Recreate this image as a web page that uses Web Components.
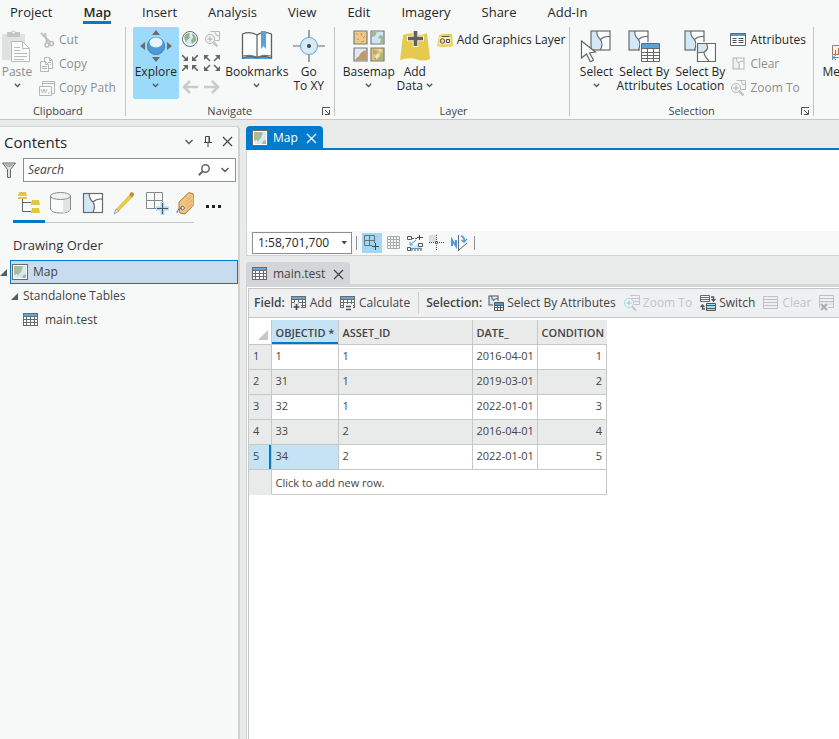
<!DOCTYPE html>
<html lang="en">
<head>
<meta charset="utf-8">
<title>Map - attribute table</title>
<style>
  html, body { margin: 0; height: 100%; }
  body { font: 12px/16px "Open Sans", "Noto Sans", sans-serif; color: #26262b; overflow: hidden; background: #e9ebea; }
</style>
</head>
<body>
<gis-app></gis-app>
<script>
const K = '#6a6a6a';
const grid = (x, y, w, h, c, head) => {
  let s = `<rect x="${x + .5}" y="${y + .5}" width="${w - 1}" height="${h - 1}" fill="#fff" stroke="${c}"/>`;
  s += `<rect x="${x + 1}" y="${y + 1}" width="${w - 2}" height="2" fill="${head}"/>`;
  for (let i = y + 3.5; i < y + h - 1; i += 3) s += `<path d="M${x} ${i}h${w}" stroke="${c}"/>`;
  for (let i = x + 3.5; i < x + w - 2; i += 4) s += `<path d="M${i} ${y + 3}v${h - 3}" stroke="${c}"/>`;
  return s;
};
const mapSheet = (x, y, s, c = K, f = '#d3e8f6') => {
  const k = s / 20;
  return `<g transform="translate(${x} ${y}) scale(${k})"><rect width="20" height="20" fill="#fcfdfd"/><path d="M0 0H6Q6 6 10 9Q12 14 10 20H0Z" fill="${f}"/><g fill="none" stroke="${c}" stroke-width="${1.2 / k}"><path d="M6 0Q6 6 10 9Q14 5 20 6M10 9Q13 13 10 20"/><rect width="20" height="20"/></g></g>`;
};
const thumb = '<rect x=".5" y=".5" width="15" height="15" fill="#fff" stroke="#6a6a6a"/><path d="M2 2h12v12H2z" fill="#a8bb9c"/><path d="M11 2h3v8l-3 1-1 3H5l2-4 2-2z" fill="#d5e9f4"/><path d="M2 11l3-1 1 2-1 2H2z" fill="#e5eee9"/>';
const ICONS = {
  paste: [32, 32, '<path d="M1 4h23v26H1z" fill="#e0e2e1"/><path d="M6 2h4q2-3 5 0h4v5H6z" fill="#c3c5c4"/><circle cx="12.500" cy="2.500" r="1" fill="#fff"/><path d="M10.500 11.500h11l7 7v13h-18z" fill="#fbfcfc" stroke="#b9bbba"/><path d="M21.500 11.500v7h7M13 17.500h6M13 20.500h6M13 23.500h13M13 26.500h13M13 29.500h10" fill="none" stroke="#b9bbba"/>'],
  cut: [16, 16, '<path d="M2 1l9 9M6 1l2 10" stroke="#c0c2c1" stroke-width="2"/><circle cx="8" cy="13" r="2" fill="none" stroke="#bbb" stroke-width="1.500"/><circle cx="12.500" cy="11.500" r="2" fill="none" stroke="#bbb" stroke-width="1.500"/>'],
  copy: [16, 16, '<g fill="#f8faf9" stroke="#b5b7b6"><path d="M5.500 1.500h5l3 3v8h-8z"/><path d="M1.500 5.500h5l3 3v7h-8z"/><path d="M6.500 5.500v3h3M3 10.500h5M3 12.500h5M10.500 1.500v3h3M9 6.500h3M11 8.500h1" fill="none"/></g>'],
  copypath: [16, 16, '<g fill="#f8faf9" stroke="#b5b7b6"><path d="M3.500 1.500h12v12h-12zM3.500 3.500h12"/><path d="M.5 6.500h12v9H.5z"/><path d="M2 9l1.500 4L5 9l1.500 4L8 9M9 13h2" fill="none"/></g>'],
  explore: [32, 32, '<g fill="#6b6b6b"><path d="M16 0l4 5h-8zM16 32l4-5h-8zM0 16l5-4v8zM32 16l-5-4v8z"/></g><circle cx="16" cy="16" r="9" fill="#4f9ad6"/><circle cx="16" cy="16" r="8.500" fill="none" stroke="#3d88c6"/><ellipse cx="16" cy="12.500" rx="6.500" ry="5" fill="#e7f4fc"/>'],
  globe: [16, 16, '<circle cx="8" cy="8" r="7.500" fill="#d7eaf5" stroke="#6a6a6a"/><circle cx="8" cy="8" r="6.200" fill="none" stroke="#fff"/><path d="M2 6q2-4 6-4l-1 3 1 2-3 2-1 3zM10 2q5 3 4 8l-4 3-1-4 2-2z" fill="#95b08b"/>'],
  zoomgray: [16, 16, '<path d="M6.500.5h9v9h-5M11 1l2 4 3-1" fill="#f4f6f5" stroke="#b9bbba"/><circle cx="6" cy="8" r="4.500" fill="#f1f4f3" stroke="#b5b7b6"/><path d="M3.500 8h5M6 5.500v5" stroke="#aaa"/><path d="M9.500 11.500l4 4" stroke="#c4c6c5" stroke-width="2.500"/>'],
  shrink: [16, 16, '<g fill="#666"><path d="M6 1v5H1zM10 1v5h5zM6 15v-5H1zM10 15v-5h5z"/></g><path d="M0 0l4 4M16 0l-4 4M0 16l4-4M16 16l-4-4" stroke="#666" stroke-width="1.600"/>'],
  expand: [16, 16, '<g fill="#666"><path d="M0 0h5L0 5zM16 0h-5l5 5zM0 16h5l-5-5zM16 16h-5l5-5z"/></g><path d="M2 2l4 4M14 2l-4 4M2 14l4-4M14 14l-4-4" stroke="#666" stroke-width="1.600"/>'],
  back: [16, 16, '<path d="M1 8h15M8 2L2 8l6 6" fill="none" stroke="#c9cbca" stroke-width="2.500"/>'],
  fwd: [16, 16, '<path d="M0 8h15M8 2l6 6-6 6" fill="none" stroke="#c9cbca" stroke-width="2.500"/>'],
  bookmarks: [32, 32, '<path d="M1 5v24h30V5" fill="#5aa2d8"/><path d="M1.500 4V28q8-3 14.500 0 6.500-3 14.500 0V4Q22 1 16 5 9 1 1.500 4z" fill="#fbfcfc" stroke="#606060" stroke-width="1.300"/><path d="M1.500 26q8-2 14.500 1 6.500-3 14.500-1" fill="none" stroke="#6a6a6a"/><path d="M16 5v22" stroke="#6a6a6a" stroke-width="1.300"/><path d="M20 1h5v18l-2.500-3-2.500 3z" fill="#5aa2d8"/>'],
  goto: [32, 32, '<path d="M16 0v7M16 25v7M0 16h7M25 16h7" stroke="#666" stroke-width="1.200"/><circle cx="16" cy="16" r="8.500" fill="#d6eaf7" stroke="#62a5d8"/><circle cx="16" cy="16" r="2" fill="#444"/>'],
  basemap: [32, 32, '<g stroke="#7a7a7a" stroke-width="1.200"><path d="M1 1h13v13H1z" fill="#ecca8a"/><path d="M18 1h13v13H18z" fill="#cfe6f4"/><path d="M1 18h13v13H1z" fill="#dfe9ef"/><path d="M18 18h13v13H18z" fill="#dfc27c"/></g><path d="M19 2h5l-2 4-3 1zM30 6v7h-3l1-4-3-1 2-3z" fill="#a0b794"/><path d="M13.500 20v10.500H2q2-4 4-4 1-5 7.500-6.500z" fill="#bd9b6a"/><path d="M20 19l4 2 1 4-5-1zM26 27l4-5v8h-6z" fill="#a6b47e"/><path d="M22 26l3-3 2 3-4 3zM26 19l3 1-2 2z" fill="#f6e5ae"/><path d="M3 3l2 2M8 3l1 3M4 9l2 1M10 8l2-2M8 12l3-1M21 28l2 1" stroke="#d78746"/>'],
  adddata: [32, 32, '<path d="M4 5q7-3 13-1 6 2 11-1l3 26q-7 3-14 0-7-2-16 1z" fill="#e6c94f"/><path d="M16.500 1v16M8 8.500h17" stroke="#f8f3dc" stroke-width="5.500"/><path d="M16.500 1v15M9 8.500h15" stroke="#606060" stroke-width="3.600"/>'],
  graphics: [16, 16, '<path d="M2 3q6-2 13-1l1 12q-8 2-16 0z" fill="#e9cf5e"/><path d="M2.500 4.500h11v8h-12z" fill="#f7efc4"/><path d="M4.500 4.500h8" stroke="#555"/><circle cx="5.500" cy="9" r="2.300" fill="#f3cfa2" stroke="#555"/><path d="M9.500 7.500h3v3h-3z" fill="#cfe6f5" stroke="#555"/>'],
  select: [32, 32, mapSheet(11, 1, 19) + '<path d="M1.500 11v17l5-4 4 8 3-2-4-7 6-1z" fill="#fbfcfc" stroke="#646464" stroke-width="1.200"/>'],
  selattr: [32, 32, mapSheet(1, 1, 19) + '<path d="M12 12h20v20H12z" fill="#f7f9f8"/><path d="M13.500 13.500h18v18h-18z" fill="#fff" stroke="#666"/><path d="M14 14h17v4H14z" fill="#5aa2d8"/><path d="M14 18.500h17M14 22.500h17M14 25.500h17M14 28.500h17M19.500 18v13M25.500 18v13" stroke="#666"/>'],
  selloc: [32, 32, mapSheet(1, 1, 19) + '<rect x="12" y="12" width="20" height="20" fill="#f7f9f8"/><path d="M13.500 13.500h18v18h-18z" fill="#fff"/><path d="M13 13h9q4 6-2 9l-7 1z" fill="#d3e8f6"/><path d="M13.500 13.500h18v18h-18zM22 13q4 6-2 9l-7 1M20 22q0 4 5 9" fill="none" stroke="#666" stroke-width="1.200"/>'],
  attributes: [16, 16, '<path d="M.5 1.500h15v12H.5z" fill="#fff" stroke="#666"/><path d="M1 2h14v2H1z" fill="#4f9ad6"/><path d="M2.500 6.500h4M2.500 8.500h4M2.500 10.500h4M8.500 6.500h5M8.500 8.500h5M8.500 10.500h5" stroke="#555"/>'],
  clear: [16, 16, mapSheet(3, 2, 11, '#bcbebd', '#eef1f0')],
  measure: [32, 32, '<path d="M1.500 15.500h29v9h-29z" fill="#fdf3ea" stroke="#b4764a"/><path d="M4.500 24v-4M7.500 24v-6M10.500 24v-4" stroke="#b4764a"/><path d="M1.500 25v5M2 27.500h29M5 25l-3 2.500L5 30" fill="none" stroke="#4f9ad6"/>'],
  chev: [7, 5, '<path d="M.8.800L3.500 3.500 6.200.800" fill="none" stroke="#555" stroke-width="1.300"/>'],
  chevbig: [10, 6, '<path d="M1.500 1l3.500 3.500L8.500 1" fill="none" stroke="#555" stroke-width="1.400"/>'],
  launcher: [8, 8, '<path d="M.5 8V.5H8M3 3l4 4M7.500 3v4.500H3" fill="none" stroke="#555"/>'],
  pin: [8, 12, '<path d="M1.500.5h4v6h-4zM0 6.500h8M4 7v4M5 1v5" fill="none" stroke="#444"/>'],
  close: [11, 11, '<path d="M1 1l9 9M10 1l-9 9" stroke="currentColor" stroke-width="1.200"/>'],
  filter: [14, 16, '<path d="M.5 1h13L8.500 7.500v8h-3v-8z" fill="#dfe3e1" stroke="#666"/><path d="M2 2h10L9 5H5z" fill="#a9b3ad"/>'],
  search: [12, 12, '<circle cx="7.500" cy="4.500" r="3.700" fill="none" stroke="#666" stroke-width="1.500"/><path d="M5 7L.8 11.200" stroke="#666" stroke-width="2"/>'],
  tree: [24, 24, '<path d="M5.500 7v13.500h9M5.500 11.500h9" fill="none" stroke="#666"/><path d="M2 1h7l1 4H1zM1 6h9v2H1zM15 9h7l1 5h-9zM15 17h7l1 5h-9z" fill="#e2c64b"/>'],
  database: [24, 24, '<path d="M1.500 5v13q1 4 10 4t10-4V5z" fill="#fafbfb" stroke="#8a8a8a"/><path d="M14 9v13q6-1 7-4V5q-1 3-7 4z" fill="#e1e4e2"/><ellipse cx="11.500" cy="5" rx="10" ry="3.500" fill="#f0f2f1" stroke="#8a8a8a"/>'],
  sheet: [24, 24, mapSheet(2.500, 2.500, 19)],
  pencil: [24, 24, '<path d="M3 18L16 4l3 3L6 20z" fill="#e6c94f"/><path d="M3 18l-2 5 5-3z" fill="#eee" stroke="#777" stroke-width=".600"/><path d="M16 4l2-3q3 0 3 3l-2 3z" fill="#c98b45"/>'],
  gridplus: [24, 24, '<path d="M1.500 1.500h16v16h-16zM9.500 1v16M1 9.500h16" fill="none" stroke="#888"/><path d="M17.500 11v13M11 17.500h13" stroke="#a5dbf5" stroke-width="4"/><path d="M17.500 12v11M12 17.500h11" stroke="#555"/>'],
  tag: [18, 24, '<path d="M3 11L13 1.500l3 1q2 0 2 3v8L9 23l-5-1q-1-1-1-4z" fill="#f0c37f" stroke="#b4763c"/><path d="M9 11l6-5M10 14l6-5M11 17l5-4" stroke="#e3a966"/><circle cx="6.500" cy="17" r="1.800" fill="#fff" stroke="#666"/><path d="M6 17q-5 1-5 5" fill="none" stroke="#666"/>'],
  dots: [16, 4, '<path d="M0 0h3v3H0zM6 0h3v3H6zM12 0h3v3h-3z" fill="#222"/>'],
  thumb: [16, 16, thumb],
  tri: [7, 7, '<path d="M7 0v7H0z" fill="#5c5c5c"/>'],
  table: [16, 14, grid(0, 0, 15, 13, K, '#5fa8de')],
  gp: [20, 20, '<path d="M2.500 2.500h10v10h-10zM7.500 2v10M2 7.500h10" fill="none" stroke="#64727a"/><path d="M10 10h8v8h-8z" fill="#a0d8f3"/><path d="M13.500 10v7M10 13.500h7" stroke="#444"/>'],
  mesh: [14, 14, '<path d="M.5.5h12v12H.5zM3.500 0v13M6.500 0v13M9.500 0v13M0 3.500h13M0 6.500h13M0 9.500h13" fill="none" stroke="#a3afa7"/>'],
  snap: [16, 16, '<path d="M4 13L14 7v7H2z" fill="#cde6f6"/><path d="M.5 1.500h4v3h-4zM11.500 8.500h4v3h-4zM.5 12.500h3v3h-3z" fill="#fff" stroke="#555"/><path d="M12.500 0v5M10 2.500h6" stroke="#444"/><path d="M5 3.500h5M4 15h11" fill="none" stroke="#555" stroke-dasharray="2 1"/><path d="M3 10l6-5M3 7v3h3M4 13.500h11" fill="none" stroke="#4f9ad6"/>'],
  cross: [16, 16, '<path d="M0 0h7v7H0z" fill="#dbe0dd"/><path d="M7.500 0v16M0 7.500h16" stroke="#555" stroke-dasharray="1 1"/><path d="M6.500 6.500h2v2h-2z" fill="#fff" stroke="#555"/>'],
  north: [17, 16, '<path d="M1 11V5l4 6V5" fill="none" stroke="#4f9ad6" stroke-width="2"/><path d="M7.500 0v16M8 15l8-7" stroke="#666"/><path d="M10 1q4 1 3 6M10.500 5l2.500 2 3-3" fill="none" stroke="#4f9ad6" stroke-width="1.500"/>'],
  tadd: [16, 16, grid(0, 1, 15, 12, K, '#5fa8de') + '<path d="M5.500 7v9M1 11.500h9" stroke="#eff0f2" stroke-width="4"/><path d="M5.500 9v6M2.500 12h6" stroke="#444" stroke-width="1.600"/>'],
  tcalc: [16, 16, grid(0, 1, 15, 12, K, '#5fa8de') + '<path d="M4 9h9v7H4z" fill="#eff0f2"/><path d="M6 11.500h5M6 14.500h5" stroke="#555" stroke-width="1.600"/>'],
  sba: [16, 16, mapSheet(1, 1, 9) + '<path d="M5 6h11v10H5z" fill="#eff0f2"/><path d="M6.500 7.500h9v8h-9z" fill="#fff" stroke="#555"/><path d="M7 8h8v2H7z" fill="#4f9ad6"/><path d="M7 10.500h8M7 12.500h8M9.500 10v5M12.500 10v5" stroke="#555"/>'],
  zsel: [16, 16, '<path d="M6 .5h9.500v9H10M7 3.500h8M10 6.500h5" fill="none" stroke="#c5c6c8"/><circle cx="5" cy="8" r="4.500" fill="#eef5f9" stroke="#a9d6ec"/><path d="M2.500 8h5M5 5.500v5" stroke="#9ac6dc"/><path d="M8 11.500l4 4" stroke="#c5c6c8" stroke-width="2"/>'],
  switch: [16, 16, '<path d="M.5.5h9v6h-9zM0 2.500h9M0 4.500h9" fill="#fff" stroke="#666"/><path d="M6.500 8.500h9v7h-9z" fill="#a9dcf5" stroke="#555"/><path d="M6 10.500h9M6 13.500h9" stroke="#555"/><path d="M11 2h2.500v4M11.500 4l2 2 2-2M5 14H2.500v-4M.5 12l2-2 2 2" fill="none" stroke="#555" stroke-width="1.300"/>'],
  rows: [16, 14, '<path d="M.5.5h14v12H.5zM0 3.500h15M0 6.500h15M0 9.500h15" fill="none" stroke="#bfc0c2"/>'],
  rowsx: [16, 16, '<path d="M.5.5h14v12H.5zM0 3.500h15M0 6.500h15" fill="none" stroke="#bfc0c2"/><path d="M1 7h13v3H1z" fill="#d4e9f4"/><path d="M1 8h8v8H1z" fill="#eff0f2"/><path d="M2 9l6 6M8 9l-6 6" stroke="#aaa" stroke-width="2"/>'],
  drop: [7, 4, '<path d="M.5 0h5.500L3.200 3.500z" fill="#444"/>'],
  corner: [10, 10, '<path d="M10 0v10H0z" fill="#c6c8c7"/>'],
};

customElements.define('ui-icon', class extends HTMLElement {
  constructor() { super(); this.attachShadow({ mode: 'open' }); }
  connectedCallback() {
    const [w, h, body] = ICONS[this.getAttribute('name')];
    this.shadowRoot.innerHTML = `<style>:host{display:block;flex:none}svg{display:block}</style><svg aria-hidden="true" width="${w}" height="${h}" viewBox="0 0 ${w} ${h}">${body}</svg>`;
  }
});

const BASE = '*{box-sizing:border-box}button,input,select{font:inherit;color:inherit;background:none;border:0;padding:0;margin:0}button{white-space:nowrap}';
const define = (tag, css, html) => {
  customElements.define(tag, class extends HTMLElement {
    constructor() {
      super();
      const t = document.createElement('template');
      t.innerHTML = `<style>${BASE}${css}</style>${typeof html === 'function' ? html(this) : html}`;
      this.attachShadow({ mode: 'open' }).append(t.content.cloneNode(true));
    }
  });
};

define('ribbon-tabs', `
  :host{display:block}
  nav{display:flex;gap:31px;padding:0 10px;height:26px}
  button{font-size:13px;line-height:18px;padding-top:3px;height:24px;border-bottom:3px solid transparent;flex:none}
  button[aria-selected=true]{font-weight:600;border-color:#007ac8}
`, '<nav role="tablist">' + ['Project', 'Map', 'Insert', 'Analysis', 'View', 'Edit', 'Imagery', 'Share', 'Add-In']
  .map(t => `<button role="tab" aria-selected="${t === 'Map'}">${t}</button>`).join('') + '</nav>');

define('ribbon-group', `
  :host{display:grid;grid-template-rows:1fr 16px;flex:none;height:92px;padding:0 var(--end,7px) 0 var(--start,7px);border-right:1px solid;border-image:linear-gradient(#c3c5c4 88px,transparent 88px) 1}
  .body{display:flex;min-width:0}
  .foot{display:grid;align-items:center;justify-items:center;color:#444;font-size:11px;position:relative}
  button{position:absolute;right:-3px;bottom:4px;height:8px}
`, el => `<div class="body"><slot></slot></div><div class="foot">${el.getAttribute('label') || ''}${el.hasAttribute('launcher') ? '<button aria-label="Options"><ui-icon name="launcher"></ui-icon></button>' : ''}</div>`);

define('ribbon-big', `
  :host{display:block;width:var(--w)}
  button{width:100%;height:72px;display:flex;flex-direction:column;align-items:center;padding-top:3px;border-radius:2px;line-height:14px}
  span{margin:3px -8px 0;text-align:center}
  :host([on]) button{background:#9bdafb}
  :host([off]) button{color:#8c8e8d}
  .c{margin-top:4px}
`, el => `<button><ui-icon name="${el.getAttribute('icon')}"></ui-icon><span><slot></slot></span>${el.hasAttribute('menu') ? '<ui-icon class="c" name="chev"></ui-icon>' : ''}</button>`);

define('ribbon-small', `
  :host{display:block}
  button{display:flex;align-items:center;gap:4px;height:24px}
  :host([off]) button{color:#8c8e8d}
`, el => `<button><ui-icon name="${el.getAttribute('icon')}"></ui-icon><span><slot></slot></span></button>`);

define('ribbon-column', `:host{display:flex;flex-direction:column;padding-top:1px;margin-left:var(--m,3px)}`, '<slot></slot>');

define('nav-tools', `
  :host{display:grid;grid-template-columns:22px 22px;grid-auto-rows:24px;place-items:center}
`, [['globe', 'Full extent'], ['zoomgray', 'Zoom to selection'], ['shrink', 'Fixed zoom in'], ['expand', 'Fixed zoom out'], ['back', 'Previous extent'], ['fwd', 'Next extent']]
  .map(([i, l]) => `<button aria-label="${l}"><ui-icon name="${i}"></ui-icon></button>`).join(''));

define('app-ribbon', `
  :host{display:block;background:#f7f9f8;border-bottom:1px solid #c6c8c7;overflow:hidden}
  .groups{display:flex;padding-top:1px}
  .inline{display:inline-block;margin-left:3px;vertical-align:2px}
`, `<ribbon-tabs></ribbon-tabs><div class="groups">
  <ribbon-group label="Clipboard" style="--start:0px;--end:9px">
    <ribbon-big icon="paste" off menu style="--w:34px">Paste</ribbon-big>
    <ribbon-column style="--m:5px"><ribbon-small icon="cut" off>Cut</ribbon-small><ribbon-small icon="copy" off>Copy</ribbon-small><ribbon-small icon="copypath" off>Copy Path</ribbon-small></ribbon-column>
  </ribbon-group>
  <ribbon-group label="Navigate" launcher>
    <ribbon-big icon="explore" on menu style="--w:46px">Explore</ribbon-big>
    <nav-tools></nav-tools>
    <ribbon-big icon="bookmarks" menu style="--w:68px">Bookmarks</ribbon-big>
    <ribbon-big icon="goto" style="--w:36px">Go<br>To XY</ribbon-big>
  </ribbon-group>
  <ribbon-group label="Layer" style="--end:4px">
    <ribbon-big icon="basemap" menu style="--w:54px">Basemap</ribbon-big>
    <ribbon-big icon="adddata" style="--w:38px">Add<br>Data<ui-icon class="inline" name="chev"></ui-icon></ribbon-big>
    <ribbon-column><ribbon-small icon="graphics">Add Graphics Layer</ribbon-small></ribbon-column>
  </ribbon-group>
  <ribbon-group label="Selection" launcher>
    <ribbon-big icon="select" menu style="--w:38px">Select</ribbon-big>
    <ribbon-big icon="selattr" style="--w:58px">Select By<br>Attributes</ribbon-big>
    <ribbon-big icon="selloc" style="--w:54px">Select By<br>Location</ribbon-big>
    <ribbon-column><ribbon-small icon="attributes">Attributes</ribbon-small><ribbon-small icon="clear" off>Clear</ribbon-small><ribbon-small icon="zoomgray" off>Zoom To</ribbon-small></ribbon-column>
  </ribbon-group>
  <ribbon-group><ribbon-big icon="measure" menu style="--w:52px">Measure</ribbon-big></ribbon-group>
</div>`);

define('contents-pane', `
  :host{display:block;background:#f7f9f8;border:1px solid #d0d2d4;border-left:0;border-right-width:2px;border-bottom:0;border-radius:0 4px 0 0;min-width:0}
  header{display:flex;align-items:center;gap:10px;padding:3px 5px 0 4px;height:26px;color:#444}
  h2{font-size:15px;line-height:20px;font-weight:400;margin:0 auto 0 0;color:#26262b}
  header button{display:block}
  .find{display:flex;align-items:center;gap:7px;padding:5px 2px 0 2px}
  .box{flex:1;min-width:0;display:flex;align-items:center;gap:10px;height:24px;border:1px solid #8e8e91;background:#fff;padding:0 5px 0 4px}
  input{flex:1;min-width:0;font-style:italic;outline:0}
  input::placeholder{color:#444;opacity:1}
  .views{display:flex;margin-left:13px;padding-top:9px}
  .strip{display:flex;border-bottom:1px solid #c6c8c7;height:32px}
  .strip button{width:32px;height:32px;display:flex;justify-content:center;border-bottom:3px solid transparent}
  .strip button:last-child{width:21px;justify-content:flex-start;padding-left:3px}
  .strip button[aria-selected=true]{border-color:#007ac8}
  .more{margin-left:12px}
  h3{font-size:13px;line-height:18px;font-weight:400;color:#333;margin:13px 0 6px 13px}
  .row{display:flex;align-items:center;height:24px;color:#444}
  .map{gap:3px}
  .map div{flex:1;height:24px;display:flex;align-items:center;gap:5px;background:#c7dcef;border:1px solid #007ac8;padding-left:1px}
  .group{gap:5px;padding-left:11px}
  .item{gap:6px;padding-left:23px}
`, `<header><h2>Contents</h2><button aria-label="Menu"><ui-icon name="chevbig"></ui-icon></button><button aria-label="Pin"><ui-icon name="pin"></ui-icon></button><button aria-label="Close"><ui-icon name="close"></ui-icon></button></header>
<div class="find"><ui-icon name="filter"></ui-icon><div class="box"><input aria-label="Search" placeholder="Search"><button aria-label="Find"><ui-icon name="search"></ui-icon></button><button aria-label="Search options"><ui-icon name="chevbig"></ui-icon></button></div></div>
<div class="views"><div class="strip" role="tablist">${[['tree', 'Drawing order'], ['database', 'Data source'], ['sheet', 'Selection'], ['pencil', 'Editing'], ['gridplus', 'Snapping'], ['tag', 'Labeling']].map(([i, l], n) => `<button role="tab" aria-label="${l}" aria-selected="${!n}"><ui-icon name="${i}"></ui-icon></button>`).join('')}</div><button class="more" aria-label="More"><ui-icon name="dots"></ui-icon></button></div>
<h3>Drawing Order</h3>
<div role="tree"><div class="row map" role="treeitem" aria-selected="true"><ui-icon name="tri"></ui-icon><div><ui-icon name="thumb"></ui-icon>Map</div></div>
<div class="row group" role="treeitem"><ui-icon name="tri"></ui-icon>Standalone Tables</div>
<div class="row item" role="treeitem"><ui-icon name="table"></ui-icon>main.test</div></div>`);

define('doc-tab', `
  :host{display:flex;box-sizing:border-box;align-items:center;gap:5px;height:22px;width:max-content;padding:2px 6px 0;border-radius:4px 4px 0 0;background:#d4d5d8;color:#444}
  :host([active]){background:#007acc;color:#fff}
  button{margin-left:3px}
`, el => `<ui-icon name="${el.getAttribute('icon')}"></ui-icon><slot></slot><button aria-label="Close tab"><ui-icon name="close"></ui-icon></button>`);

define('map-view', `
  :host{display:block;min-width:0}
  .line{border-top:2px solid #007acc}
  .pane{border:1px solid #d0d2d4;border-right:0;border-top-width:0}
  .canvas{height:81px;background:#fff}
  .bar{display:flex;align-items:center;height:24px;background:#f7f9f8;padding-left:5px;gap:6px}
  .scale{display:grid;align-items:center;width:100px;height:22px;border:1px solid #8e8e91;background:#fff;margin-right:-2px}
  .scale>*{grid-area:1/1}
  select{appearance:none;width:100%;padding-left:5px;outline:0}
  .scale ui-icon{justify-self:end;margin-right:3px}
  .sep{width:1px;height:14px;background:#8e8e99}
  .bar button.on{background:#a0d8f3;height:20px;width:20px;margin:0 -1px}
`, `<doc-tab active icon="thumb">Map</doc-tab><div class="line"></div><div class="pane"><div class="canvas"></div><div class="bar">
<div class="scale"><select aria-label="Map scale"><option>1:58,701,700</option></select><ui-icon name="drop"></ui-icon></div><span class="sep"></span>
<button class="on" aria-label="Snapping"><ui-icon name="gp"></ui-icon></button><button aria-label="Grid"><ui-icon name="mesh"></ui-icon></button><button aria-label="Dynamic constraints"><ui-icon name="snap"></ui-icon></button><button aria-label="Inference"><ui-icon name="cross"></ui-icon></button><button aria-label="Correct to north"><ui-icon name="north"></ui-icon></button><span class="sep"></span></div></div>`);

define('table-tools', `
  :host{display:flex;box-sizing:border-box;align-items:center;height:30px;overflow:hidden;background:#eff0f2;border:1px solid #c4c5c8;border-right:0;padding-left:5px;color:#444}
  b{font-weight:600;margin-right:6px;white-space:nowrap}
  button{display:flex;align-items:center;gap:3px;margin-right:8px;flex:none}
  button:disabled{color:#c3c4c6}
  i{width:1px;height:22px;background:#cbccd0;margin-right:7px;flex:none}
`, `<b>Field:</b><button><ui-icon name="tadd"></ui-icon>Add</button><button><ui-icon name="tcalc"></ui-icon>Calculate</button><i></i><b>Selection:</b><button><ui-icon name="sba"></ui-icon>Select By Attributes</button><button disabled><ui-icon name="zsel"></ui-icon>Zoom To</button><button><ui-icon name="switch"></ui-icon>Switch</button><button disabled><ui-icon name="rows"></ui-icon>Clear</button><button disabled><ui-icon name="rowsx"></ui-icon>Delete</button>`);

const ROWS = [[1, 1, 1, '2016-04-01', 1], [2, 31, 1, '2019-03-01', 2], [3, 32, 1, '2022-01-01', 3], [4, 33, 2, '2016-04-01', 4], [5, 34, 2, '2022-01-01', 5]];
define('data-grid', `
  :host{display:block;background:#fff;color:#444;font-size:11px}
  table{border-collapse:collapse;table-layout:fixed;width:358px;margin-top:2px}
  th,td{height:25px;padding:0 4px 1px;border:1px solid #c6c8c7;text-align:left;line-height:14px;white-space:nowrap}
  thead th{height:24px;background:#e9ebea;border-top:0;font-weight:600;padding-top:3px}
  thead th:first-child{background:#fff;padding:6px 3px 0 0}
  thead th:last-child{border-right-color:#e9ebea}
  thead th:first-child ui-icon{margin-left:auto;width:10px}
  th:first-child{border-left:0}
  tbody th{background:#e9ebea;font-weight:400}
  tbody tr:nth-child(even) td{background:#e9ebea}
  td:last-child{text-align:right}
  thead th.key{background:#c6e2f5;box-shadow:inset 0 -2px #007ac8}
  tbody .cur th{background:#c6e2f5;box-shadow:inset -2px 0 #007ac8}
  tbody .cur td:nth-child(2){background:#c6e2f5}
  tbody tr.new td{text-align:left;background:#fff;padding-top:3px}
  tbody .new th{border-bottom-color:#e9ebea}
`, `<table><colgroup><col style="width:22px"><col style="width:67px"><col style="width:134px"><col style="width:65px"><col></colgroup><thead><tr><th><ui-icon name="corner"></ui-icon></th><th class="key">OBJECTID *</th><th>ASSET_ID</th><th>DATE_</th><th>CONDITION</th></tr></thead><tbody>${ROWS.map(r => `<tr${r[0] === 5 ? ' class="cur"' : ''}><th scope="row">${r[0]}</th>${r.slice(1).map(c => `<td>${c}</td>`).join('')}</tr>`).join('')}<tr class="new"><th></th><td colspan="4">Click to add new row.</td></tr></tbody></table>`);

define('table-view', `
  :host{display:flex;flex-direction:column;min-width:0;flex:1;margin-top:6px}
  .frame{flex:1;display:flex;flex-direction:column;border-top:3px solid #d4d5d8;border-left:1px solid #d0d2d4;background:#fff;padding:1px 0 0 1px}
  data-grid{flex:1;border-left:1px solid #c6c8c7}
`, `<doc-tab icon="table">main.test</doc-tab><div class="frame"><table-tools></table-tools><data-grid></data-grid></div>`);

define('gis-app', `
  :host{display:flex;flex-direction:column;height:100vh}
  main{flex:1;min-height:0;display:grid;grid-template-columns:240px minmax(0,1fr);gap:6px;padding-top:6px}
  .docs{display:flex;flex-direction:column;min-width:0}
`, `<app-ribbon></app-ribbon><main><contents-pane></contents-pane><div class="docs"><map-view></map-view><table-view></table-view></div></main>`);
</script>
</body>
</html>
